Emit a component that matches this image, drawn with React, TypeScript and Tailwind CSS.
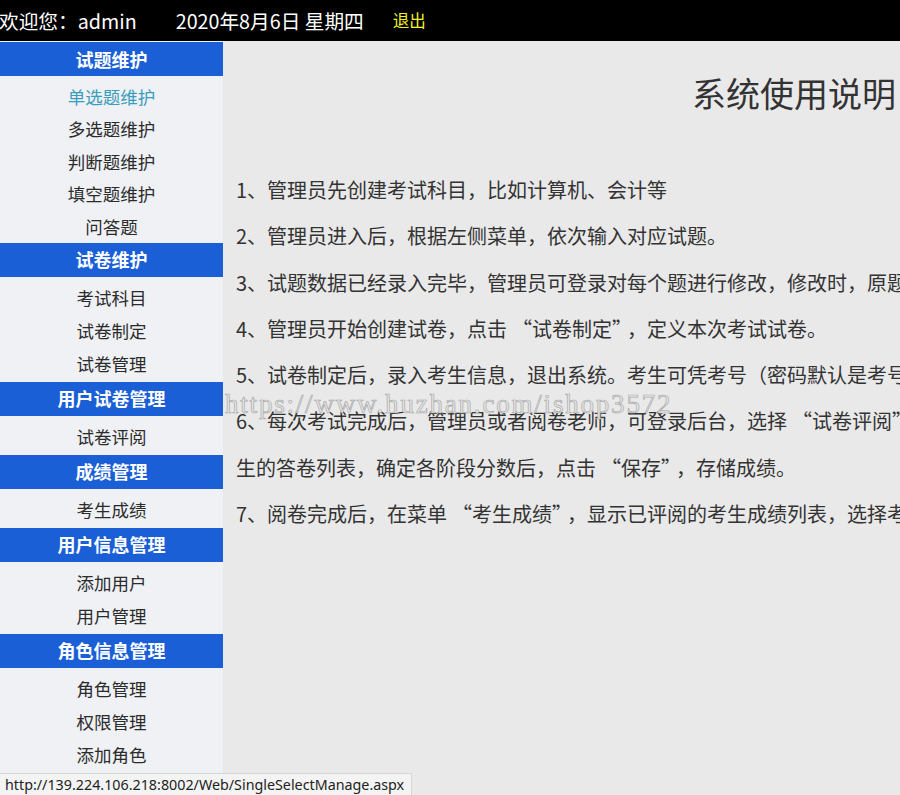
import React from "react"

type Section = {
  title: string
  items: string[]
  first?: boolean
}

const sections: Section[] = [
  { title: "试题维护", items: ["单选题维护", "多选题维护", "判断题维护", "填空题维护", "问答题"], first: true },
  { title: "试卷维护", items: ["考试科目", "试卷制定", "试卷管理"] },
  { title: "用户试卷管理", items: ["试卷评阅"] },
  { title: "成绩管理", items: ["考生成绩"] },
  { title: "用户信息管理", items: ["添加用户", "用户管理"] },
  { title: "角色信息管理", items: ["角色管理", "权限管理", "添加角色"] },
]

const lines = [
  "1、管理员先创建考试科目，比如计算机、会计等",
  "2、管理员进入后，根据左侧菜单，依次输入对应试题。",
  "3、试题数据已经录入完毕，管理员可登录对每个题进行修改，修改时，原题目将被覆盖。",
  "4、管理员开始创建试卷，点击“试卷制定”，定义本次考试试卷。",
  "5、试卷制定后，录入考生信息，退出系统。考生可凭考号（密码默认是考号）登录参加考试。",
  "6、每次考试完成后，管理员或者阅卷老师，可登录后台，选择“试卷评阅”，进入考",
  "生的答卷列表，确定各阶段分数后，点击“保存”，存储成绩。",
  "7、阅卷完成后，在菜单“考生成绩”，显示已评阅的考生成绩列表，选择考生查看成绩。",
]

const cjk = "font-['Microsoft_YaHei','Noto_Sans_CJK_SC',sans-serif]"

// quotes get a little extra room, as on the original page
function Line({ text }: { text: string }) {
  const parts = text.split(/([“”])/)
  return (
    <div className="text-[20px] leading-[46.3px] whitespace-nowrap">
      {parts.map((p, i) =>
        p === "“" ? (
          <span key={i} className="ml-[5px]">
            {p}
          </span>
        ) : p === "”" ? (
          <span key={i} className="mr-[5px]">
            {p}
          </span>
        ) : (
          <span key={i}>{p}</span>
        )
      )}
    </div>
  )
}

function Sidebar() {
  return (
    <div className="w-[225px] shrink-0 bg-[#eff1f5] pt-px border-r-2 border-[#e6e8ec]">
      {sections.map((s) => (
        <div key={s.title}>
          <div className="h-[34px] w-[223px] bg-[#1b5fd7] text-white text-[18px] font-bold flex items-center justify-center">
            {s.title}
          </div>
          <div className={s.first ? "pt-[5px]" : "pt-[5px] pb-[1px]"}>
            {s.items.map((it, i) => (
              <div
                key={it}
                className={`${s.first ? "h-[32.4px]" : "h-[33px]"} flex items-center justify-center text-[17.5px] ${
                  s.first && i === 0 ? "text-[#3a9dbd]" : "text-[#2b2b2b]"
                }`}
              >
                {it}
              </div>
            ))}
          </div>
        </div>
      ))}
    </div>
  )
}

export default function App() {
  return (
    <div className={`relative w-[900px] h-[795px] overflow-hidden bg-[#e9e9e9] ${cjk}`}>
      <div className="h-[41px] bg-black text-white flex items-center text-[19.7px] whitespace-nowrap">
        <span className="-ml-px">欢迎您：admin</span>
        <span className="ml-[39px]">2020年8月6日 星期四</span>
        <span className="ml-[29px] text-[16.5px] text-[#f0f020]">退出</span>
      </div>
      <div className="flex">
        <Sidebar />
        <div className="flex-1 min-w-0 overflow-hidden text-[#333]">
          <div className="pt-[31px] pl-[467px] text-[34px] leading-[41px] whitespace-nowrap">系统使用说明</div>
          <div className="mt-[54px] pl-[11px]">
            {lines.map((l) => (
              <Line key={l} text={l} />
            ))}
          </div>
        </div>
      </div>
      <div className="absolute left-[225px] top-[384px] text-[27px] tracking-[1.8px] font-['Liberation_Serif',serif] text-[#e6e6e6] [-webkit-text-stroke:0.7px_#ababab] whitespace-nowrap pointer-events-none">
        https://www.huzhan.com/ishop3572
      </div>
      <div className="absolute left-0 bottom-0 h-[22px] w-[412px] bg-[#f4f4f4] border-t border-r border-[#d6d6d6] flex items-center pl-[5px] text-[14.3px] text-[#222] font-['Noto_Sans',sans-serif] whitespace-nowrap">
        http://139.224.106.218:8002/Web/SingleSelectManage.aspx
      </div>
    </div>
  )
}
